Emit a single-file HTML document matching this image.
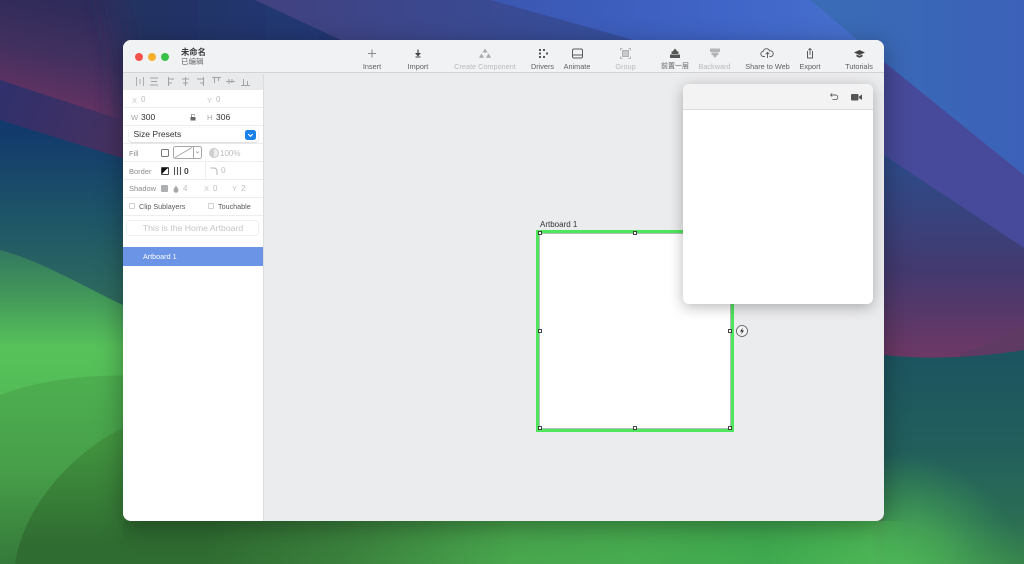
<!DOCTYPE html>
<html><head><meta charset="utf-8"><style>
html,body{margin:0;padding:0;width:1024px;height:564px;overflow:hidden;background:#2b2b5a}
*{box-sizing:border-box}
body{font-family:"Liberation Sans","Noto Sans CJK SC",sans-serif}
#root{position:absolute;left:0;top:0;width:1024px;height:564px;overflow:hidden;contain:strict}
#bg{position:absolute;left:0;top:0;display:block}
#win{position:absolute;left:123px;top:40px;width:761px;height:481px;border-radius:8px;background:#ebecee;overflow:hidden;box-shadow:0 6px 26px rgba(0,0,0,.34);filter:blur(.35px)}
.a{position:absolute;white-space:nowrap;line-height:1}
.c{transform:translateX(-50%)}
.tl{top:23px;font-size:7.3px;color:#5f6063}
.dis{color:#b9babc}
.lb{font-size:7.5px;color:#8b8c8f}
.ft{color:#bcbdc0;font-size:8px}
.v{color:#333;font-size:8.5px}
.line{position:absolute;left:0;width:140px;height:1px;background:#eeeeef}
</style></head><body>
<div id="root">
<svg id="bg" width="1024" height="564" viewBox="0 0 1024 564">
<defs>
<linearGradient id="g1" gradientUnits="userSpaceOnUse" x1="100" y1="10" x2="80" y2="110"><stop offset="0" stop-color="#2f2b5a"/><stop offset=".5" stop-color="#41305f"/><stop offset="1" stop-color="#633262"/></linearGradient>
<linearGradient id="g1b" gradientUnits="userSpaceOnUse" x1="0" y1="90" x2="122" y2="140"><stop offset="0" stop-color="#30306c"/><stop offset="1" stop-color="#463160"/></linearGradient>
<linearGradient id="g2" gradientUnits="userSpaceOnUse" x1="120" y1="0" x2="345" y2="0"><stop offset="0" stop-color="#25305f"/><stop offset="1" stop-color="#1f3a78"/></linearGradient>
<linearGradient id="g3" gradientUnits="userSpaceOnUse" x1="255" y1="0" x2="640" y2="0"><stop offset="0" stop-color="#41417f"/><stop offset="1" stop-color="#35509f"/></linearGradient>
<linearGradient id="g4" gradientUnits="userSpaceOnUse" x1="490" y1="0" x2="880" y2="30"><stop offset="0" stop-color="#3a56b0"/><stop offset=".6" stop-color="#4065c8"/><stop offset="1" stop-color="#4872cf"/></linearGradient>
<linearGradient id="g5" gradientUnits="userSpaceOnUse" x1="810" y1="0" x2="1024" y2="0"><stop offset="0" stop-color="#3a6cb6"/><stop offset="1" stop-color="#3b62b8"/></linearGradient>
<linearGradient id="g7" gradientUnits="userSpaceOnUse" x1="0" y1="170" x2="0" y2="355"><stop offset="0" stop-color="#2f4a88"/><stop offset=".55" stop-color="#43396f"/><stop offset="1" stop-color="#6c3865"/></linearGradient>
<linearGradient id="g8" gradientUnits="userSpaceOnUse" x1="0" y1="130" x2="0" y2="300"><stop offset="0" stop-color="#123a6c"/><stop offset=".5" stop-color="#1d5468"/><stop offset="1" stop-color="#2e6b5e"/></linearGradient>
<linearGradient id="g9" gradientUnits="userSpaceOnUse" x1="0" y1="250" x2="0" y2="400"><stop offset="0" stop-color="#33785f"/><stop offset=".3" stop-color="#42975a"/><stop offset=".65" stop-color="#57c25a"/><stop offset="1" stop-color="#52bb56"/></linearGradient>
<linearGradient id="g10" gradientUnits="userSpaceOnUse" x1="0" y1="355" x2="0" y2="564"><stop offset="0" stop-color="#1c5460"/><stop offset=".45" stop-color="#225f5c"/><stop offset=".8" stop-color="#2b6e54"/><stop offset="1" stop-color="#38864c"/></linearGradient>
<linearGradient id="g11" gradientUnits="userSpaceOnUse" x1="0" y1="375" x2="0" y2="564"><stop offset="0" stop-color="#4daf50"/><stop offset=".5" stop-color="#479f49"/><stop offset="1" stop-color="#35793a"/></linearGradient>
<linearGradient id="g12" gradientUnits="userSpaceOnUse" x1="0" y1="425" x2="0" y2="545"><stop offset="0" stop-color="#459a42"/><stop offset="1" stop-color="#2f6c31"/></linearGradient>
<linearGradient id="g13" gradientUnits="userSpaceOnUse" x1="0" y1="0" x2="1024" y2="0">
 <stop offset="0" stop-color="#2f6c31"/><stop offset=".2" stop-color="#2f6c31"/><stop offset=".33" stop-color="#3a7f3c"/><stop offset=".5" stop-color="#48a64d"/><stop offset=".62" stop-color="#47ab4f"/><stop offset=".75" stop-color="#3fa94f"/><stop offset=".85" stop-color="#4bb555"/><stop offset=".885" stop-color="#4bb555" stop-opacity="0"/></linearGradient>
<radialGradient id="blob" gradientUnits="userSpaceOnUse" cx="900" cy="580" r="125"><stop offset="0" stop-color="#4fbc57"/><stop offset=".45" stop-color="#48a955" stop-opacity=".8"/><stop offset="1" stop-color="#3f9a55" stop-opacity="0"/></radialGradient>
<filter id="s" filterUnits="userSpaceOnUse" x="-100" y="-100" width="1300" height="800"><feGaussianBlur stdDeviation="14"/></filter>
</defs>
<rect width="1024" height="564" fill="url(#g1)"/>
<path d="M100 -40 L300 -40 L345 42 L345 200 L123 200 L123 55Z" fill="url(#g2)" filter="url(#s)"/>
<path d="M255 0 L490 0 L640 42 L884 200 L884 330 L345 42Z" fill="url(#g3)"/>
<path d="M490 0 H1024 V260 L884 160 L640 42Z" fill="url(#g4)"/>
<path d="M810 0 H1024 V175 L884 62Z" fill="url(#g5)"/>
<path d="M884 62 L1024 175 L1024 250 L884 155Z" fill="#47499a"/>
<path d="M884 155 L1024 248 L1024 360 L884 360Z" fill="url(#g7)"/>
<path d="M960 354 Q1000 340 1024 325 V356 L960 358Z" fill="#5f3a63"/>
<path d="M0 80 L122 120 L122 200 L0 200Z" fill="url(#g1b)"/>
<path d="M0 120 L122 158 L300 250 L300 400 L0 400Z" fill="url(#g8)"/>
<path d="M0 250 C40 260 90 290 123 305 L300 400 L300 564 L0 564Z" fill="url(#g9)"/>
<path d="M884 355 Q950 362 1024 350 V564 H884Z" fill="url(#g10)"/>
<rect x="775" y="455" width="249" height="109" fill="url(#blob)"/>
<path d="M0 395 C40 380 80 375 140 375 L300 400 V564 H0Z" fill="url(#g11)"/>
<path d="M15 564 C25 495 90 440 130 425 L300 420 V564Z" fill="url(#g12)"/>
<rect x="123" y="521" width="790" height="43" fill="url(#g13)"/>
</svg>

<div id="win">
 <div class="a" style="left:0;top:0;width:761px;height:33px;background:#f1f2f3;border-bottom:1px solid #d2d3d5"></div>
 <div class="a" style="left:12px;top:13px;width:8px;height:8px;border-radius:50%;background:#f4524c"></div>
 <div class="a" style="left:25px;top:13px;width:8px;height:8px;border-radius:50%;background:#f5b02e"></div>
 <div class="a" style="left:38px;top:13px;width:8px;height:8px;border-radius:50%;background:#38c048"></div>
 <div class="a" style="left:58px;top:7.5px;font-size:8.3px;font-weight:bold;color:#3a3a3c">未命名</div>
 <div class="a" style="left:58px;top:17.5px;font-size:7.5px;color:#66676a">已编辑</div>

 <div class="a c tl" style="left:249px">Insert</div>
 <div class="a c tl" style="left:295px">Import</div>
 <div class="a c tl dis" style="left:362px">Create Component</div>
 <div class="a c tl" style="left:419.5px">Drivers</div>
 <div class="a c tl" style="left:454px">Animate</div>
 <div class="a c tl dis" style="left:502.5px">Group</div>
 <div class="a c tl" style="left:552px;font-size:7px">前置一层</div>
 <div class="a c tl dis" style="left:591.5px">Backward</div>
 <div class="a c tl" style="left:644.5px">Share to Web</div>
 <div class="a c tl" style="left:687px">Export</div>
 <div class="a c tl" style="left:736px">Tutorials</div>

 <svg class="a" style="left:0;top:0" width="761" height="33" viewBox="0 0 761 33">
  <path d="M249 9.5v8M245 13.5h8" stroke="#8a8b8d" stroke-width="1" fill="none"/>
  <path d="M295 9.5v4" stroke="#444" stroke-width="1.2"/><path d="M292 13h6l-3 3.5z" fill="#444"/><path d="M292.5 17h5" stroke="#444"/>
  <path d="M362 8.5l2.6 4h-5.2zM358.5 13.5l2.6 4.2h-5.2zM365.5 13.5l2.6 4.2h-5.2z" fill="#a9aaac"/>
  <g fill="#555"><rect x="416" y="9" width="2" height="2"/><rect x="420" y="9" width="2" height="2"/><rect x="416" y="12.5" width="2" height="2"/><rect x="423" y="12.5" width="2" height="2"/><rect x="416" y="16" width="2" height="2"/><rect x="420" y="16" width="2" height="2"/></g>
  <rect x="449.5" y="9" width="10" height="9" rx="1.5" fill="none" stroke="#5a5b5d" stroke-width="1"/><path d="M449.5 15h10" stroke="#5a5b5d"/>
  <g stroke="#b0b1b3" fill="none"><rect x="499.5" y="10.5" width="6" height="6" fill="#c8c9cb"/><path d="M497.5 8.5h2M505.5 8.5h2M497.5 18.5h2M505.5 18.5h2M497.5 8.5v2M507.5 8.5v2M497.5 16.5v2M507.5 16.5v2"/></g>
  <path d="M552 8.5l2.5 3h-5z" fill="#555"/><rect x="548.5" y="11.5" width="7" height="2.5" fill="#555"/><rect x="547" y="14.5" width="10" height="3.5" fill="#555"/>
  <rect x="587" y="8.5" width="10" height="3.5" fill="#b4b5b7"/><rect x="588.5" y="12.5" width="7" height="2.5" fill="#b4b5b7"/><path d="M592 18l2.5-3h-5z" fill="#b4b5b7"/>
  <path d="M642 16.5h-1.5a2.6 2.6 0 0 1-.2-5.2 3.2 3.2 0 0 1 6.2-.4 2.8 2.8 0 0 1 1.6 5.6h-1.6" fill="none" stroke="#5a5b5d" stroke-width=".9"/><path d="M644.5 18v-5.5M642.7 14.2l1.8-1.8 1.8 1.8" fill="none" stroke="#5a5b5d" stroke-width=".9"/>
  <path d="M685 11.5h-.5v6.5h5v-6.5h-.5" fill="none" stroke="#5a5b5d"/><path d="M687 15v-6.5M685.5 10l1.5-1.5 1.5 1.5" fill="none" stroke="#5a5b5d" stroke-width=".9"/>
  <path d="M731 12.5l5.5-2.5 5.5 2.5-5.5 2.5z" fill="#444"/><path d="M733.5 14.5v2l3 1.2 3-1.2v-2l-3 1.2z" fill="#444"/>
 </svg>

 <div class="a" style="left:0;top:34px;width:141px;height:447px;background:#fff;border-right:1px solid #dcdddf"></div>
 <div class="a" style="left:0;top:34px;width:140px;height:16px;background:#e9eaec"></div>
 <svg class="a" style="left:0;top:34px" width="140" height="16" viewBox="0 0 140 16">
  <g stroke="#a2a3a6" stroke-width="1" fill="none">
   <path d="M13.5 3v9M20.5 3v9M17 5v5" stroke="#aeafb2"/>
   <path d="M27 4h8M28 7.5h6M27 11h8"/>
   <path d="M45.5 3v9M46 5h5M46 9h3"/>
   <path d="M62.5 3v9M59 5h7M60 9h5"/>
   <path d="M80.5 3v9M74 5h6M77 9h3"/>
   <path d="M89 3.5h9M91.5 4v5M95.5 4v3"/>
   <path d="M103 7.5h9M106 5v5M109 5v4"/>
   <path d="M118 11.5h9M120.5 5v6M124.5 7v4"/>
  </g>
 </svg>
 <div class="line" style="top:67px"></div><div class="line" style="top:85px"></div><div class="line" style="top:103px"></div><div class="line" style="top:121px"></div><div class="line" style="top:139px"></div><div class="line" style="top:157px"></div><div class="line" style="top:175px"></div>

 <div class="a lb" style="left:9px;top:57px;color:#c4c5c8">X</div><div class="a ft" style="left:18px;top:56px">0</div>
 <div class="a lb" style="left:84px;top:57px;color:#c4c5c8">Y</div><div class="a ft" style="left:93px;top:56px">0</div>
 <div class="a lb" style="left:8px;top:74px;color:#a5a6a9">W</div><div class="a v" style="left:18px;top:73px">300</div>
 <svg class="a" style="left:67px;top:74px" width="6" height="7"><rect x=".5" y="3" width="5" height="3.5" fill="#666"/><path d="M1.5 3V1.5a1.5 1.5 0 0 1 3 0" fill="none" stroke="#777" stroke-width=".8"/></svg>
 <div class="a lb" style="left:84px;top:74px;color:#a5a6a9">H</div><div class="a v" style="left:93px;top:73px">306</div>

 <div class="a" style="left:6px;top:88px;width:129px;height:14px;background:#fff;border-radius:3px;box-shadow:0 .5px 1.5px rgba(0,0,0,.25)"></div>
 <div class="a" style="left:10.5px;top:90px;font-size:8.5px;color:#333">Size Presets</div>
 <svg class="a" style="left:122px;top:90px" width="11" height="10"><rect width="11" height="10" rx="2.5" fill="#1a80ea"/><path d="M3.2 4l2.3 2.3L7.8 4" fill="none" stroke="#fff" stroke-width="1.1"/></svg>

 <div class="a lb" style="left:6px;top:110px">Fill</div>
 <div class="a" style="left:38px;top:109px;width:8px;height:8px;border:1px solid #777;border-radius:1.5px"></div>
 <svg class="a" style="left:50px;top:106px" width="30" height="14"><rect x=".5" y=".5" width="28" height="12" rx="2" fill="#fff" stroke="#a6a7aa"/><path d="M2 11.5L19 1.5M20.5 1v11" stroke="#a6a7aa" fill="none"/><path d="M23 5.5l1.5 1.5L26 5.5" stroke="#999" fill="none" stroke-width=".7"/></svg>
 <div class="a" style="left:86px;top:108px;width:10px;height:10px;border-radius:50%;background:linear-gradient(90deg,#cfd0d2 50%,#eee 50%);border:1px solid #ccc"></div>
 <div class="a ft" style="left:97px;top:109.5px">100%</div>

 <div class="a lb" style="left:6px;top:128px">Border</div>
 <div class="a" style="left:38px;top:127px;width:8px;height:8px;background:linear-gradient(135deg,#111 50%,#fff 50%);border:1px solid #444;border-radius:1px"></div>
 <svg class="a" style="left:51px;top:127px" width="8" height="8"><path d="M.5 0v8M3.5 0v8M6.5 0v8" stroke="#555" stroke-width="1.1"/></svg>
 <div class="a" style="left:61px;top:127px;font-size:8.5px;font-weight:bold;color:#444">0</div>
 <div class="a" style="left:82px;top:122px;width:1px;height:17px;background:#eeeeef"></div>
 <svg class="a" style="left:87px;top:127px" width="8" height="8"><path d="M.5 1H4a3 3 0 0 1 3 3v4" fill="none" stroke="#b5b6b8"/></svg>
 <div class="a ft" style="left:98px;top:127px">0</div>

 <div class="a lb" style="left:6px;top:145px">Shadow</div>
 <div class="a" style="left:38px;top:145px;width:7px;height:7px;background:#aeafb2;border-radius:1px"></div>
 <svg class="a" style="left:50px;top:144.5px" width="6" height="8"><path d="M3 .5C4.5 3 5.5 4 5.5 5.3a2.5 2.5 0 0 1-5 0C.5 4 1.5 3 3 .5z" fill="#a6a7aa"/></svg>
 <div class="a ft" style="left:60px;top:145px">4</div>
 <div class="a lb" style="left:81px;top:145px;color:#c4c5c8">X</div><div class="a ft" style="left:90px;top:145px">0</div>
 <div class="a lb" style="left:109px;top:145px;color:#c4c5c8">Y</div><div class="a ft" style="left:118px;top:145px">2</div>

 <div class="a" style="left:6px;top:163px;width:6px;height:6px;border:1px solid #d0d1d3;border-radius:1px"></div>
 <div class="a" style="left:16px;top:162.5px;font-size:7.2px;color:#58595c">Clip Sublayers</div>
 <div class="a" style="left:85px;top:163px;width:6px;height:6px;border:1px solid #d0d1d3;border-radius:1px"></div>
 <div class="a" style="left:95px;top:162.5px;font-size:7.2px;color:#58595c">Touchable</div>

 <div class="a" style="left:3px;top:180px;width:133px;height:16px;border:1px solid #f0f0f1;border-radius:4px"></div>
 <div class="a c" style="left:70px;top:183.5px;font-size:8.7px;color:#c3c4c6">This is the Home Artboard</div>

 <div class="a" style="left:0;top:207px;width:140px;height:19px;background:#6b94e6"></div>
 <div class="a" style="left:20px;top:212.5px;font-size:7.2px;color:#fff">Artboard 1</div>

 <div class="a" style="left:417px;top:180.5px;font-size:8px;color:#333">Artboard 1</div>
 <div class="a" style="left:413px;top:190px;width:198px;height:202px;background:#fff;border:3px solid #4de65c;box-shadow:inset 0 0 0 1px #b5bcb5"></div>
 <svg class="a" style="left:413px;top:190px" width="220" height="204" viewBox="0 0 220 204">
  <g fill="#fff" stroke="#333" stroke-width=".9">
   <rect x="2.5" y="1.5" width="3" height="3"/><rect x="97.5" y="1.5" width="3" height="3"/><rect x="192.5" y="1.5" width="3" height="3"/>
   <rect x="2.5" y="99.5" width="3" height="3"/><rect x="192.5" y="99.5" width="3" height="3"/>
   <rect x="2.5" y="196.5" width="3" height="3"/><rect x="97.5" y="196.5" width="3" height="3"/><rect x="192.5" y="196.5" width="3" height="3"/>
  </g>
  <circle cx="206" cy="101" r="5.5" fill="#f5f5f5" stroke="#555" stroke-width=".8"/>
  <path d="M207 97.5l-3 4h2l-1 3 3-4h-2z" fill="#222"/>
 </svg>

 <div class="a" style="left:560px;top:44px;width:190px;height:220px;background:#fff;border-radius:6px;box-shadow:0 3px 14px rgba(0,0,0,.28);overflow:hidden">
  <div style="height:26px;background:#f3f3f4;border-bottom:1px solid #dcdcde"></div>
 </div>
 <svg class="a" style="left:700px;top:50px" width="50" height="14" viewBox="0 0 50 14">
  <path d="M7.5 5h5a2.2 2.2 0 0 1 0 4.6H9.5M7.5 5l1.7-1.5M7.5 5l1.7 1.5" fill="none" stroke="#666" stroke-width=".9"/>
  <rect x="28" y="4" width="7.5" height="6.5" rx="1" fill="#555"/><path d="M36 6.5l3-2v5.5l-3-2z" fill="#555"/>
 </svg>
</div>
</div>
</body></html>
